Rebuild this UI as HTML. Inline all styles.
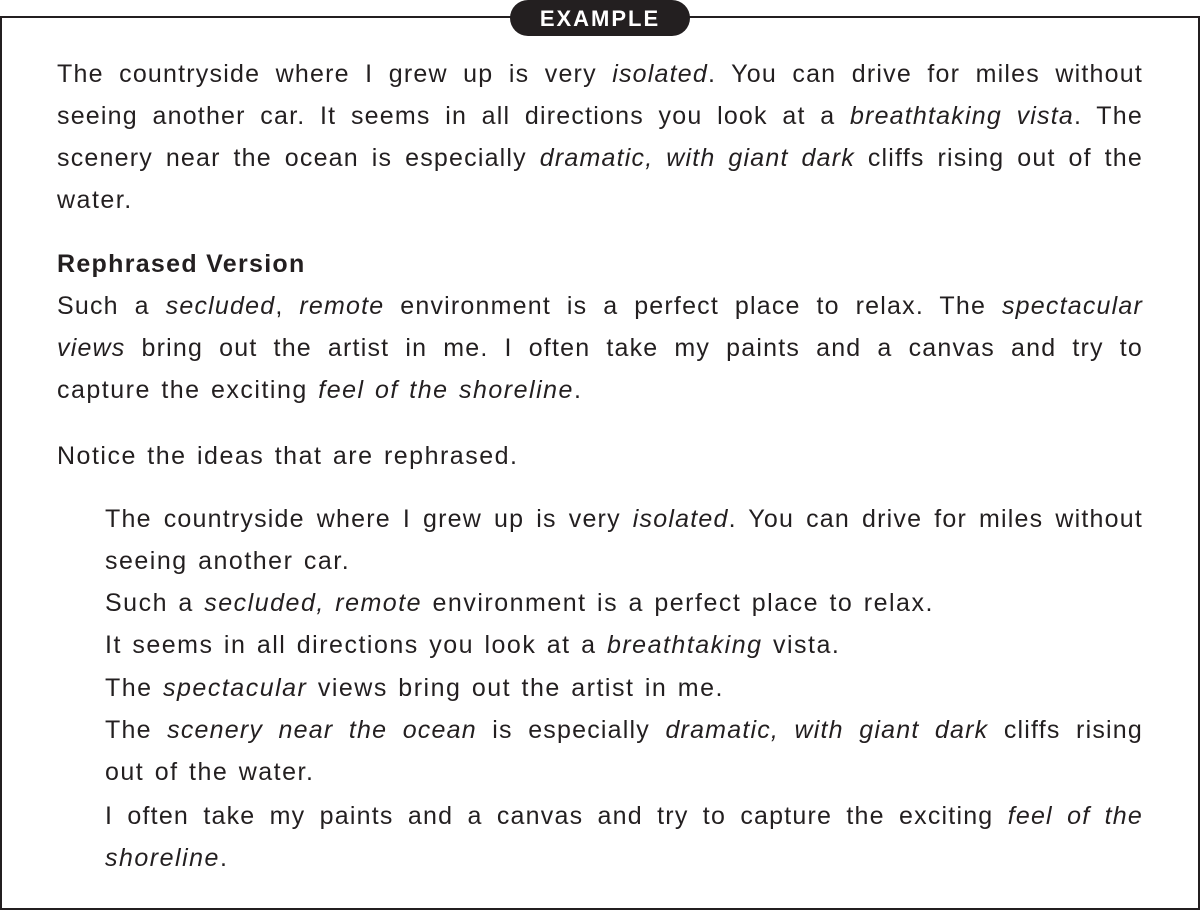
<!DOCTYPE html>
<html><head><meta charset="utf-8"><style>
html,body{margin:0;padding:0;background:#fff;}
body{width:1200px;height:909px;position:relative;overflow:hidden;font-family:"Liberation Sans",Arial,sans-serif;color:#231f20;}
.box{position:absolute;left:0;top:16px;width:1196px;height:890px;border:2px solid #231f20;}
.pill{position:absolute;left:510px;top:0;width:180px;height:36px;background:#231f20;border-radius:18px;color:#fff;font-weight:bold;font-size:22px;text-align:center;line-height:37px;letter-spacing:2px;}
.l{position:absolute;left:57px;width:1086px;height:42px;line-height:42px;font-size:25px;letter-spacing:1.5px;word-spacing:2px;white-space:nowrap;}
.j{text-align:justify;text-align-last:justify;white-space:normal;word-spacing:0;letter-spacing:1.2px;}
.i{left:105px;width:1038px;}
.b{font-weight:bold;letter-spacing:1.3px;word-spacing:0;}
</style></head><body>
<div class="box"></div>
<div class="pill">EXAMPLE</div>
<div class="l j" style="top:53px">The countryside where I grew up is very <i>isolated</i>. You can drive for miles without</div>
<div class="l j" style="top:95px">seeing another car. It seems in all directions you look at a <i>breathtaking vista</i>. The</div>
<div class="l j" style="top:137px">scenery near the ocean is especially <i>dramatic, with giant dark</i> cliffs rising out of the</div>
<div class="l" style="top:179px">water.</div>
<div class="l b" style="top:243px">Rephrased Version</div>
<div class="l j" style="top:285px">Such a <i>secluded</i>, <i>remote</i> environment is a perfect place to relax. The <i>spectacular</i></div>
<div class="l j" style="top:327px"><i>views</i> bring out the artist in me. I often take my paints and a canvas and try to</div>
<div class="l" style="top:369px">capture the exciting <i>feel of the shoreline</i>.</div>
<div class="l" style="top:435px">Notice the ideas that are rephrased.</div>
<div class="l i j" style="top:498px">The countryside where I grew up is very <i>isolated</i>. You can drive for miles without</div>
<div class="l i" style="top:540px">seeing another car.</div>
<div class="l i" style="top:582px">Such a <i>secluded, remote</i> environment is a perfect place to relax.</div>
<div class="l i" style="top:624px">It seems in all directions you look at a <i>breathtaking</i> vista.</div>
<div class="l i" style="top:667px">The <i>spectacular</i> views bring out the artist in me.</div>
<div class="l i j" style="top:709px">The <i>scenery near the ocean</i> is especially <i>dramatic, with giant dark</i> cliffs rising</div>
<div class="l i" style="top:751px">out of the water.</div>
<div class="l i j" style="top:795px">I often take my paints and a canvas and try to capture the exciting <i>feel of the</i></div>
<div class="l i" style="top:837px"><i>shoreline</i>.</div>
</body></html>
